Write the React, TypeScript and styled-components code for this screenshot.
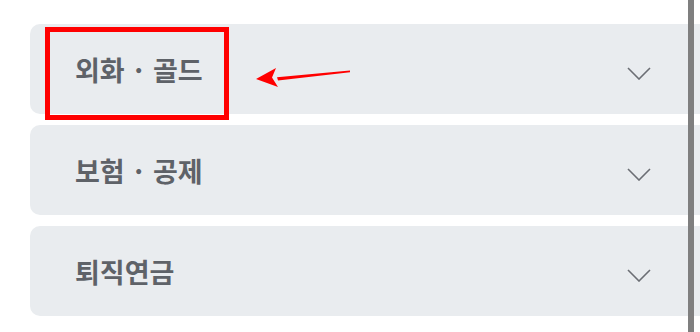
import styled, { createGlobalStyle } from "styled-components";

const GlobalStyle = createGlobalStyle`
    html, body {
        margin: 0;
        padding: 0;
        background: #ffffff;
    }
    body {
        font-family: "Noto Sans CJK KR", "Noto Sans", sans-serif;
        overflow: hidden;
    }
`

const Page = styled.div`
    position: relative;
    width: 700px;
    height: 332px;
    padding: 24px 0 0 30px;
    box-sizing: border-box;
    overflow: hidden;
`

const List = styled.div`
    display: flex;
    flex-direction: column;
    gap: 11px;
`

const Card = styled.div`
    display: flex;
    align-items: center;
    justify-content: space-between;
    height: 90px;
    padding: 0 49px 0 45px;
    background-color: #e9ecef;
    border-radius: 10px 0 0 10px;
    box-sizing: border-box;
`

const Title = styled.span`
    font-size: 27px;
    font-weight: 700;
    color: #5e6268;
    line-height: 1;
`

const Chevron = styled.svg`
    width: 24px;
    height: 13px;
    margin-top: 8px;
`

const Highlight = styled.div`
    position: absolute;
    left: 45px;
    top: 27px;
    width: 184px;
    height: 93px;
    border: 5px solid #ff0000;
    box-sizing: border-box;
`

const Pointer = styled.svg`
    position: absolute;
    left: 250px;
    top: 60px;
    width: 110px;
    height: 35px;
`

const ScrollLine = styled.div`
    position: absolute;
    top: 0;
    left: 688px;
    width: 6px;
    height: 100%;
    background-color: #7f7f7f;
`

const items = ["외화 · 골드", "보험 · 공제", "퇴직연금"];

export default function App() {
    return (
        <>
            <GlobalStyle/>
            <Page>
                <List>
                    {items.map((item) => (
                        <Card key={item}>
                            <Title>{item}</Title>
                            <Chevron viewBox="0 0 24 13">
                                <polyline points="1,1 12,12 23,1" fill="none" stroke="#6b6e74"
                                          strokeWidth="1.6" strokeLinejoin="miter"/>
                            </Chevron>
                        </Card>
                    ))}
                </List>
                <Highlight/>
                <Pointer viewBox="0 0 110 35">
                    {/* arrow tip at page (256,79), tail at (350,71) */}
                    <path d="M100 10.5 L27 17.2 L28 20.6 L100 12.2 Z" fill="#ff0000"/>
                    <path d="M6 19 L26 8 L22 17.5 L28 27 Z" fill="#ff0000"/>
                </Pointer>
                <ScrollLine/>
            </Page>
        </>
    )
}
